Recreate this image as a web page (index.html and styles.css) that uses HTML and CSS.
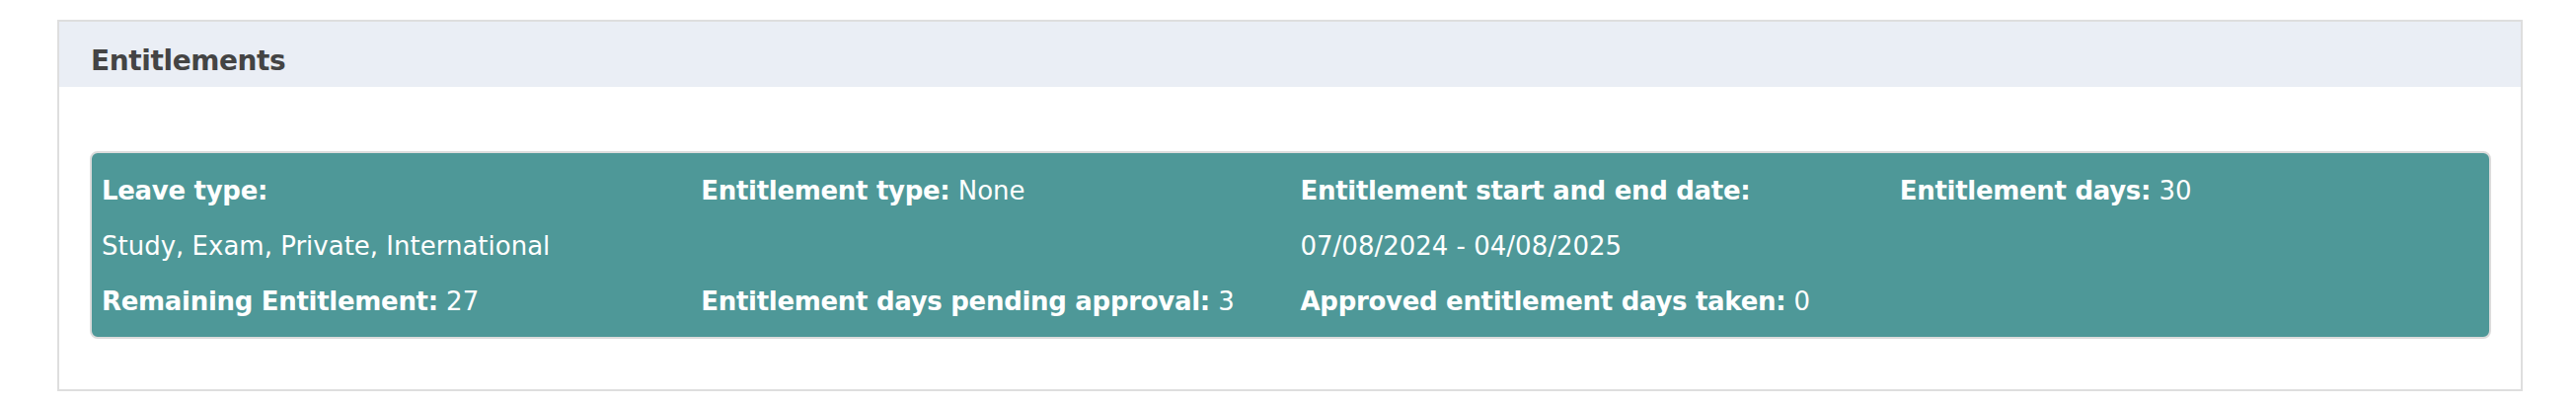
FILE: index.html
```html
<!DOCTYPE html>
<html lang="en">
<head>
  <meta charset="UTF-8" />
  <title>Entitlements</title>
  <link rel="stylesheet" href="styles.css">
</head>
<body>
  <section class="panel">
    <header class="panel-head">Entitlements</header>
    <div class="panel-body">
      <div class="ent-box">
        <div class="ent-cell"><b>Leave type:</b></div>
        <div class="ent-cell"><b>Entitlement type:</b> None</div>
        <div class="ent-cell"><b>Entitlement start and end date:</b></div>
        <div class="ent-cell"><b>Entitlement days:</b> 30</div>

        <div class="ent-cell">Study, Exam, Private, International</div>
        <div class="ent-cell"></div>
        <div class="ent-cell">07/08/2024 - 04/08/2025</div>
        <div class="ent-cell"></div>

        <div class="ent-cell"><b>Remaining Entitlement:</b> 27</div>
        <div class="ent-cell"><b>Entitlement days pending approval:</b> 3</div>
        <div class="ent-cell"><b>Approved entitlement days taken:</b> 0</div>
        <div class="ent-cell"></div>
      </div>
    </div>
  </section>
</body>
</html>
```
FILE: styles.css
```css
:root {
  --panel-border: #dedede;
  --head-bg: #eaeef5;
  --head-text: #444;
  --teal: #4e9898;
}
* { margin: 0; padding: 0; box-sizing: border-box; }
body { font-family: "DejaVu Sans", Verdana, sans-serif; background: #fff; }
.panel { margin: 20px 54px 0 58px; border: 2px solid var(--panel-border); }
.panel-head { background: var(--head-bg); color: var(--head-text); font-size: 28px; font-weight: bold; letter-spacing: -0.4px; padding: 23px 32px 10px; }
.panel-body { padding: 65px 30px 51px 31px; }
.ent-box { display: grid; grid-template-columns: repeat(4, 1fr); background: var(--teal); border: 2px solid #dcdcdc; border-radius: 8px; padding: 10px 0 8px; color: #fff; font-size: 26px; line-height: 56px; }
.ent-cell { padding-left: 10px; white-space: nowrap; min-height: 56px; }
.ent-cell b { font-weight: bold; letter-spacing: -0.3px; }
```
